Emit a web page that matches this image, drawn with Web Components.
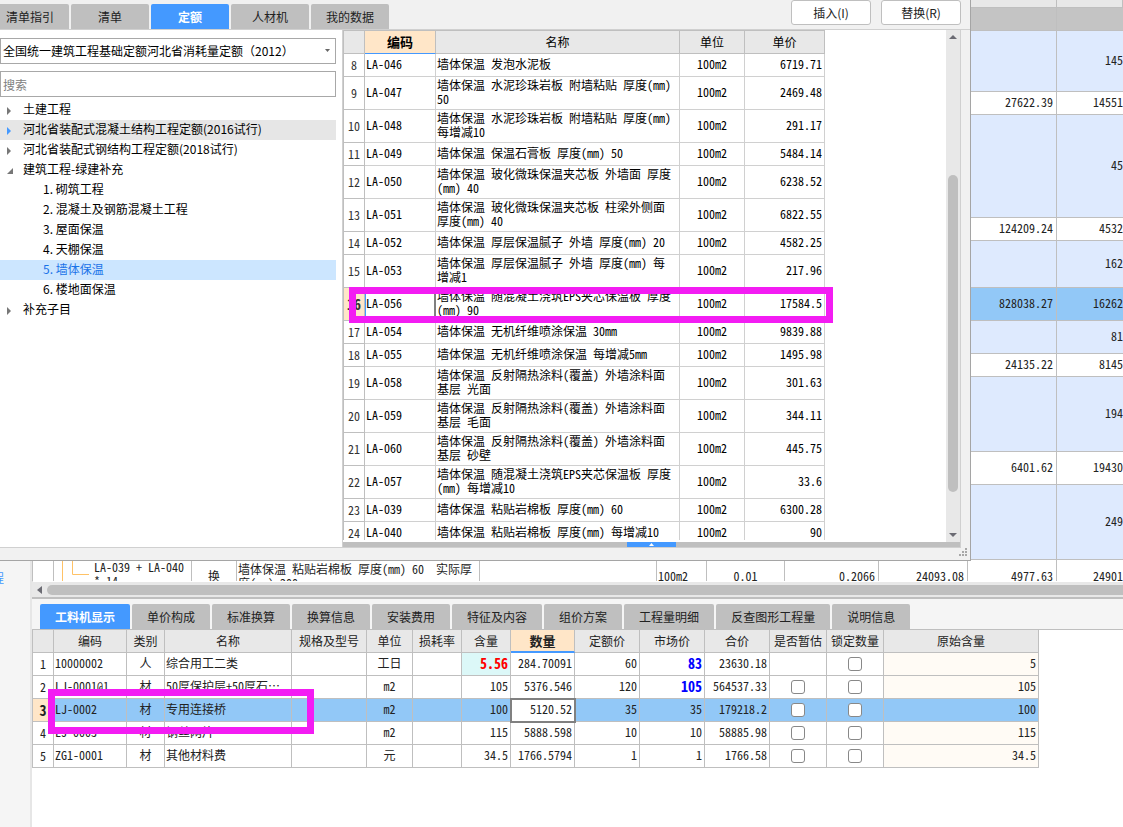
<!DOCTYPE html>
<html lang="zh-CN">
<head>
<meta charset="utf-8">
<title>定额查询</title>
<style>
html, body { margin: 0; height: 100%; overflow: hidden; }
body {
  --ui: "Noto Sans CJK SC", "Noto Sans", sans-serif;
  --mono: "Noto Sans Mono CJK SC", "Liberation Mono", "Noto Sans CJK SC", monospace;
  --line: #bfbfbf;
  --accent: #4499ff;
  --mark: #f31cf3;
  font: 12px/14px var(--ui);
  color: #222;
}
</style>
</head>
<body>
<app-shell>
  <side-rail slot="rail"></side-rail>
  <bill-grid slot="upper"></bill-grid>
  <detail-panel slot="lower"></detail-panel>
  <quota-dialog slot="dialog"></quota-dialog>
</app-shell>
<script>
const define = (name, html, setup) => customElements.define(name, class extends HTMLElement {
  constructor() {
    super();
    this.attachShadow({ mode: 'open' }).innerHTML = html;
    if (setup) setup(this.shadowRoot);
  }
});

const tableStyle = `
  table { border-collapse: separate; border-spacing: 0; table-layout: fixed; width: 100%; font: 12px/14px var(--mono); }
  th, td { box-sizing: border-box; height: 23px; padding: 0 1px 3px; border: 0 solid var(--rule, #bfbfbf); border-width: 0 1px 1px 0;
    font-weight: normal; white-space: pre; overflow: hidden; text-align: left; vertical-align: middle; }
  thead th { background: #e8e8e8; text-align: center; padding: 0; font-family: var(--ui); }
  .n { text-align: right; }
  .c { text-align: center; }
  .t td, .t th { height: 33px; }
`;

const fill = (root, widths, head, rows, classes) => {
  const esc = s => s.replace(/&/g, '&amp;');
  const table = root.querySelector('table');
  table.innerHTML =
    '<colgroup>' + widths.map(w => `<col style="width:${w}">`).join('') + '</colgroup>' +
    '<thead><tr>' + head.map(h => h.startsWith('*')
      ? `<th scope="col" class="hot">${h.slice(1)}</th>` : `<th scope="col">${h}</th>`).join('') + '</tr></thead>' +
    '<tbody>' + rows.map(r => `<tr class="${r.cls || ''}"${r.h ? ` style="--h:${r.h}px"` : ''}>` +
      r.cells.map((c, i) => {
        const own = (r.mark && r.mark[i]) || '';
        const body = c === '[]' ? `<input type="checkbox" aria-label="${head[i]}">` : (c.startsWith('<') ? c : esc(c));
        return i === 0 && !r.plain
          ? `<th scope="row" class="num">${body}</th>`
          : `<td class="${classes[i] || ''} ${own}">${body}</td>`;
      }).join('') + '</tr>').join('') + '</tbody>';
};

define('app-shell', `
<style>
  :host { display: grid; position: relative; height: 100vh; overflow: hidden; background: #fff;
    grid-template-columns: 32px minmax(0, 1fr); grid-template-rows: minmax(0, 1fr) 245px; }
  slot[name=rail]::slotted(*) { grid-row: 1 / 3; }
  slot[name=dialog]::slotted(*) { position: absolute; inset: 0 152px 266px 0; }
</style>
<slot name="rail"></slot><slot name="upper"></slot><slot name="lower"></slot><slot name="dialog"></slot>`);

define('side-rail', `
<style>
  :host { display: flex; flex-direction: column; justify-content: flex-end; box-sizing: border-box;
    background: #f5f5f5; border-right: 2px solid #e6e6e6; }
  a { display: flex; justify-content: flex-end; width: 4px; overflow: hidden; margin-bottom: 240px;
    line-height: 18px; color: var(--accent); text-decoration: none; white-space: nowrap; }
</style>
<a href="#project">程</a>`);

define('bill-grid', `
<style>${tableStyle}
  :host { display: block; overflow: hidden; box-sizing: border-box; border-left: 1px solid var(--line); border-bottom: 1px solid #fff; background: #fff; }
  table { margin-top: -15px; }
  thead th { padding-bottom: 4px; }
  tbody td { height: var(--h, 23px); }
  .b td { background: #deeafe; }
  .g td { background: #c4c4c4; }
  .s td { background: #92c8f7; }
  .f td { padding-bottom: 1px; }
  td.n { padding-right: 3px; }
  td.open { padding-right: 0; border-right: 0; }
  .tree { display: flex; gap: 5px; padding-left: 7px; }
  svg { flex: none; margin-left: -1px; }
</style>
<table></table>`, root => {
  const row = (h, cls, a, b) => ({ h, cls, plain: true, cells: ['', '', '', '', '', '', '', '', '', a, b] });
  const tree = '<div class="tree"><svg width="28" height="32" fill="none" stroke="#ffc266"><path d="M1.500 0V32M11.500 0V14.500H28"/></svg><span>LA-039 + LA-040\n* 14</span></div>';
  fill(root,
    ['21px', '138px', '45px', '243px', '177px', '50px', '78px', '94px', '89px', '89px', 'auto'],
    ['', '', '', '', '', '', '', '', '', '单价', '综合单价'],
    [
      row(23, 'g', '', ''), row(61, 'b', '', '145'), row(23, '', '27622.39', '14551'),
      row(103, 'b', '', '45'), row(23, '', '124209.24', '4532'), row(47, 'b', '', '162'),
      row(33, 's', '828038.27', '16262'), row(33, 'b', '', '81'), row(23, '', '24135.22', '8145'),
      row(75, 'b', '', '194'), row(33, '', '6401.62', '19430'), row(75, 'b', '', '249'),
      { h: 33, cls: 'f', plain: true, cells: ['', tree, '换', '墙体保温 粘贴岩棉板 厚度(mm) 60  实际厚\n度(mm):200', '', '100m2', '0.01', '0.2066', '24093.08', '4977.63', '24901'] }
    ],
    ['', '', 'c', '', '', '', 'c', 'n', 'n', 'n', 'n open']);
});

define('tab-strip', `
<style>
  :host { display: flex; gap: 2px; }
  ::slotted(button) { box-sizing: border-box; min-width: 78px; height: 25px; padding: 0 15px; border: 0; border-radius: 2px 2px 0 0;
    background: var(--line); color: #222; font: 12px/14px var(--ui); white-space: nowrap; }
  ::slotted(button[aria-selected=true]) { background: var(--accent); color: #fff; font-weight: bold; }
</style>
<slot></slot>`);

define('mark-box', `
<style>:host { display: block; position: absolute; box-sizing: border-box; border: 7px solid var(--mark); pointer-events: none; }</style>`);

define('detail-panel', `
<style>${tableStyle}
  :host { display: flex; flex-direction: column; background: #fff; position: relative; }
  .scroll { display: flex; align-items: center; gap: 5px; height: 12px; padding: 2px 0 1px 5px; background: #e8e8e8; border-bottom: 2px solid var(--line); }
  .thumb { flex: 1; height: 10px; border-radius: 5px 0 0 5px; background: var(--line); }
  .bar { background: #f5f5f5; padding: 5px 8px 0; border-bottom: 1px solid var(--line); }
  .wrap { width: 1007px; box-sizing: border-box; border-left: 1px solid var(--line); }
  thead th.hot { background: #ffe6c8; font-weight: bold; font-size: 13px; border-bottom: 2px solid var(--accent); }
  .num { text-align: center; padding: 0; }
  td.n { padding-right: 2px; }
  td:last-child { background: #fffbf5; }
  td.red { background: #dcf8f8; color: #f00; font-weight: bold; font-size: 14px; }
  td.blue { color: #00f; font-weight: bold; font-size: 14px; }
  .sel td { background: #92c8f7; }
  .sel .num { background: #ffe6c8; font-weight: bold; font-size: 14px; }
  .sel td.edit { background: #fff; outline: 2px solid #808080; outline-offset: -1px; }
  td.k { padding-bottom: 1px; }
  input { appearance: none; display: block; margin: 0 auto; width: 14px; height: 14px; box-sizing: border-box; border: 1px solid #888; border-radius: 3px; background: #fff; }
  mark-box { left: 16px; top: 107px; width: 266px; height: 45px; }
</style>
<div class="scroll"><svg width="5" height="8" fill="#6b6b73"><path d="M5 0V8L0 4Z"/></svg><div class="thumb"></div></div>
<div class="bar"><tab-strip role="tablist">
  <button role="tab" aria-selected="true">工料机显示</button><button role="tab">单价构成</button><button role="tab">标准换算</button><button role="tab">换算信息</button><button role="tab">安装费用</button><button role="tab">特征及内容</button><button role="tab">组价方案</button><button role="tab">工程量明细</button><button role="tab">反查图形工程量</button><button role="tab">说明信息</button>
</tab-strip></div>
<div class="wrap"><table></table></div>
<mark-box></mark-box>`, root => {
  fill(root,
    ['21px', '73px', '38px', '127px', '75px', '46px', '49px', '49px', '64px', '65px', '65px', '65px', '57px', '57px', 'auto'],
    ['', '编码', '类别', '名称', '规格及型号', '单位', '损耗率', '含量', '*数量', '定额价', '市场价', '合价', '是否暂估', '锁定数量', '原始含量'],
    [
      { cells: ['1', '10000002', '人', '综合用工二类', '', '工日', '', '5.56', '284.70091', '60', '83', '23630.18', '', '[]', '5'], mark: { 7: 'red', 10: 'blue' } },
      { cells: ['2', 'LJ-0001@1', '材', '50厚保护层+50厚石⋯', '', 'm2', '', '105', '5376.546', '120', '105', '564537.33', '[]', '[]', '105'], mark: { 10: 'blue' } },
      { cls: 'sel', cells: ['3', 'LJ-0002', '材', '专用连接桥', '', 'm2', '', '100', '5120.52', '35', '35', '179218.2', '[]', '[]', '100'], mark: { 8: 'edit' } },
      { cells: ['4', 'LJ-0003', '材', '钢丝网片', '', 'm2', '', '115', '5888.598', '10', '10', '58885.98', '[]', '[]', '115'] },
      { cells: ['5', 'ZG1-0001', '材', '其他材料费', '', '元', '', '34.5', '1766.5794', '1', '1', '1766.58', '[]', '[]', '34.5'] }
    ],
    ['', '', 'c', '', '', 'c', '', 'n', 'n', 'n', 'n', 'n', 'k', 'k', 'n']);
});

define('quota-dialog', `
<style>
  :host { display: flex; flex-direction: column; box-sizing: border-box; background: #f1f1f1;
    border: solid #a5a5a5; border-width: 0 1px 1px 0; color: #000; }
  header { display: flex; flex: none; justify-content: space-between; align-items: flex-end; height: 29px; border-bottom: 1px solid #d0d0d0; padding-right: 9px; }
  tab-strip { margin-left: -9px; }
  .actions { display: flex; gap: 10px; align-self: flex-start; }
  .actions button { width: 80px; height: 25px; padding: 0; border: 1px solid var(--line); border-radius: 3px; background: #fff; color: #222; font: 12px/14px var(--ui); }
  main { display: flex; flex: 1; min-height: 0; }
  quota-picker { flex: 0 0 342px; }
  quota-grid { flex: 1; min-width: 0; margin-right: 9px; }
  footer { display: flex; flex: none; justify-content: flex-end; height: 12px; }
  footer svg { margin: 0 2px 0 0; }
</style>
<header>
  <tab-strip role="tablist"><button role="tab">清单指引</button><button role="tab">清单</button><button role="tab" aria-selected="true">定额</button><button role="tab">人材机</button><button role="tab">我的数据</button></tab-strip>
  <div class="actions"><button>插入(I)</button><button>替换(R)</button></div>
</header>
<main><quota-picker></quota-picker><quota-grid></quota-grid></main>
<footer><svg width="9" height="9" fill="#a8a8a8"><path d="M6 0h2v2h-2zM3 3h2v2h-2zM6 3h2v2h-2zM0 6h2v2h-2zM3 6h2v2h-2zM6 6h2v2h-2z"/></svg></footer>`);

define('quota-picker', `
<style>
  :host { display: block; box-sizing: border-box; padding: 8px 6px 0 0; background: #fff; border-bottom: 1px solid #d0d0d0; }
  .combo { position: relative; margin-bottom: 7px; }
  .combo svg { position: absolute; right: 6px; top: 11px; pointer-events: none; }
  select, input { display: block; box-sizing: border-box; width: 100%; height: 26px; padding: 0 2px; border: 1px solid #a8a8a8; border-radius: 0;
    background: #fff; color: #000; font: 12px/14px var(--ui); appearance: none; outline: 0; }
  input::placeholder { color: #808080; opacity: 1; }
  ul { list-style: none; margin: 0; padding: 0; }
  .tree { margin-top: 3px; }
  a { display: flex; align-items: center; box-sizing: border-box; height: 20px; padding-bottom: 2px; color: #000; text-decoration: none; white-space: pre; }
  a svg { flex: none; width: 8px; height: 8px; margin: 3px 9px 0 6px; fill: #777; }
  ul ul a { padding-left: 43px; }
  .hover { background: #e6e6e6; }
  .hover svg { fill: var(--accent); }
  .on { background: #cce6ff; color: #1a73e8; }
</style>
<div class="combo"><select aria-label="定额库"><option>全国统一建筑工程基础定额河北省消耗量定额（2012）</option></select>
<svg width="5" height="3" fill="#666"><path d="M0 0H5L2.500 3Z"/></svg></div>
<input type="search" placeholder="搜索" aria-label="搜索">
<ul class="tree">
  <li><a href="#a"><svg><path d="M1 0V8L5 4Z"/></svg>土建工程</a></li>
  <li><a href="#b" class="hover"><svg><path d="M1 0V8L5 4Z"/></svg>河北省装配式混凝土结构工程定额(2016试行)</a></li>
  <li><a href="#c"><svg><path d="M1 0V8L5 4Z"/></svg>河北省装配式钢结构工程定额(2018试行)</a></li>
  <li><a href="#d"><svg><path d="M7 1V7H1Z"/></svg>建筑工程-绿建补充</a>
    <ul>
      <li><a href="#d1">1. 砌筑工程</a></li>
      <li><a href="#d2">2. 混凝土及钢筋混凝土工程</a></li>
      <li><a href="#d3">3. 屋面保温</a></li>
      <li><a href="#d4">4. 天棚保温</a></li>
      <li><a href="#d5" class="on">5. 墙体保温</a></li>
      <li><a href="#d6">6. 楼地面保温</a></li>
    </ul></li>
  <li><a href="#e"><svg><path d="M1 0V8L5 4Z"/></svg>补充子目</a></li>
</ul>`);

define('quota-grid', `
<style>${tableStyle}
  :host { --rule: #d0d0d0; display: flex; flex-direction: column; position: relative; box-sizing: border-box; background: #fff;
    border: solid #d0d0d0; border-width: 0 1px 1px 1px; }
  .area { display: flex; flex: 1; min-height: 0; justify-content: space-between; }
  .view { width: 482px; box-sizing: border-box; overflow: hidden; margin-bottom: 2px; border: solid var(--line); border-width: 1px 0 0 1px; }
  thead th { border-color: var(--line); }
  thead th.hot { background: #ffe6c8; font-weight: bold; font-size: 13px; border-bottom-color: var(--accent); }
  .num { text-align: center; padding: 0; color: #333; border-color: var(--line); }
  td.n { padding-right: 2px; }
  .sel .num { background: #ffe6c8; font-weight: bold; font-size: 14px; }
  .sel td:nth-child(2) { border-right: 2px solid #808080; box-shadow: inset 1px 0 var(--accent); }
  .vbar { display: flex; flex-direction: column; align-items: center; width: 14px; background: #e8e8e8; }
  .vbar svg { flex: none; margin: 5px 0; }
  .thumb { width: 10px; border-radius: 5px; background: var(--line); flex: 316; }
  .gap { flex: 130; } .gap.end { flex: 36; }
  .handle { display: flex; flex: none; height: 5px; background: var(--line); }
  .handle button { display: flex; justify-content: center; align-items: center; width: 49px; height: 5px; margin-left: 284px; padding: 0; border: 0; background: var(--accent); }
  mark-box { left: 6px; top: 257px; width: 484px; height: 36px; }
</style>
<div class="area">
  <div class="view"><table></table></div>
  <div class="vbar"><svg width="8" height="4" fill="#6b6b73"><path d="M0 4H8L4 0Z"/></svg><div class="gap"></div><div class="thumb"></div><div class="gap end"></div><svg width="8" height="4" fill="#6b6b73"><path d="M0 0H8L4 4Z"/></svg></div>
</div>
<div class="handle"><button aria-label="展开"><svg width="5" height="3" fill="#fff"><path d="M0 3H5L2.500 0Z"/></svg></button></div>
<mark-box></mark-box>`, root => {
  const data = [
    ['8', 'LA-046', '发泡水泥板', '6719.71'],
    ['9', 'LA-047', '水泥珍珠岩板 附墙粘贴 厚度(mm)\n50', '2469.48'],
    ['10', 'LA-048', '水泥珍珠岩板 附墙粘贴 厚度(mm)\n每增减10', '291.17'],
    ['11', 'LA-049', '保温石膏板 厚度(mm) 50', '5484.14'],
    ['12', 'LA-050', '玻化微珠保温夹芯板 外墙面 厚度\n(mm) 40', '6238.52'],
    ['13', 'LA-051', '玻化微珠保温夹芯板 柱梁外侧面\n厚度(mm) 40', '6822.55'],
    ['14', 'LA-052', '厚层保温腻子 外墙 厚度(mm) 20', '4582.25'],
    ['15', 'LA-053', '厚层保温腻子 外墙 厚度(mm) 每\n增减1', '217.96'],
    ['16', 'LA-056', '随混凝土浇筑EPS夹芯保温板 厚度\n(mm) 90', '17584.5'],
    ['17', 'LA-054', '无机纤维喷涂保温 30mm', '9839.88'],
    ['18', 'LA-055', '无机纤维喷涂保温 每增减5mm', '1495.98'],
    ['19', 'LA-058', '反射隔热涂料(覆盖) 外墙涂料面\n基层 光面', '301.63'],
    ['20', 'LA-059', '反射隔热涂料(覆盖) 外墙涂料面\n基层 毛面', '344.11'],
    ['21', 'LA-060', '反射隔热涂料(覆盖) 外墙涂料面\n基层 砂壁', '445.75'],
    ['22', 'LA-057', '随混凝土浇筑EPS夹芯保温板 厚度\n(mm) 每增减10', '33.6'],
    ['23', 'LA-039', '粘贴岩棉板 厚度(mm) 60', '6300.28'],
    ['24', 'LA-040', '粘贴岩棉板 厚度(mm) 每增减10', '90']
  ];
  fill(root, ['21px', '71px', '244px', '65px', 'auto'],
    ['', '*编码', '名称', '单位', '单价'],
    data.map(([n, code, name, price]) => ({
      cls: (name.includes('\n') ? 't ' : '') + (n === '16' ? 'sel' : ''),
      cells: [n, code, '墙体保温 ' + name, '100m2', price]
    })),
    ['', '', '', 'c', 'n']);
});
</script>
</body>
</html>
